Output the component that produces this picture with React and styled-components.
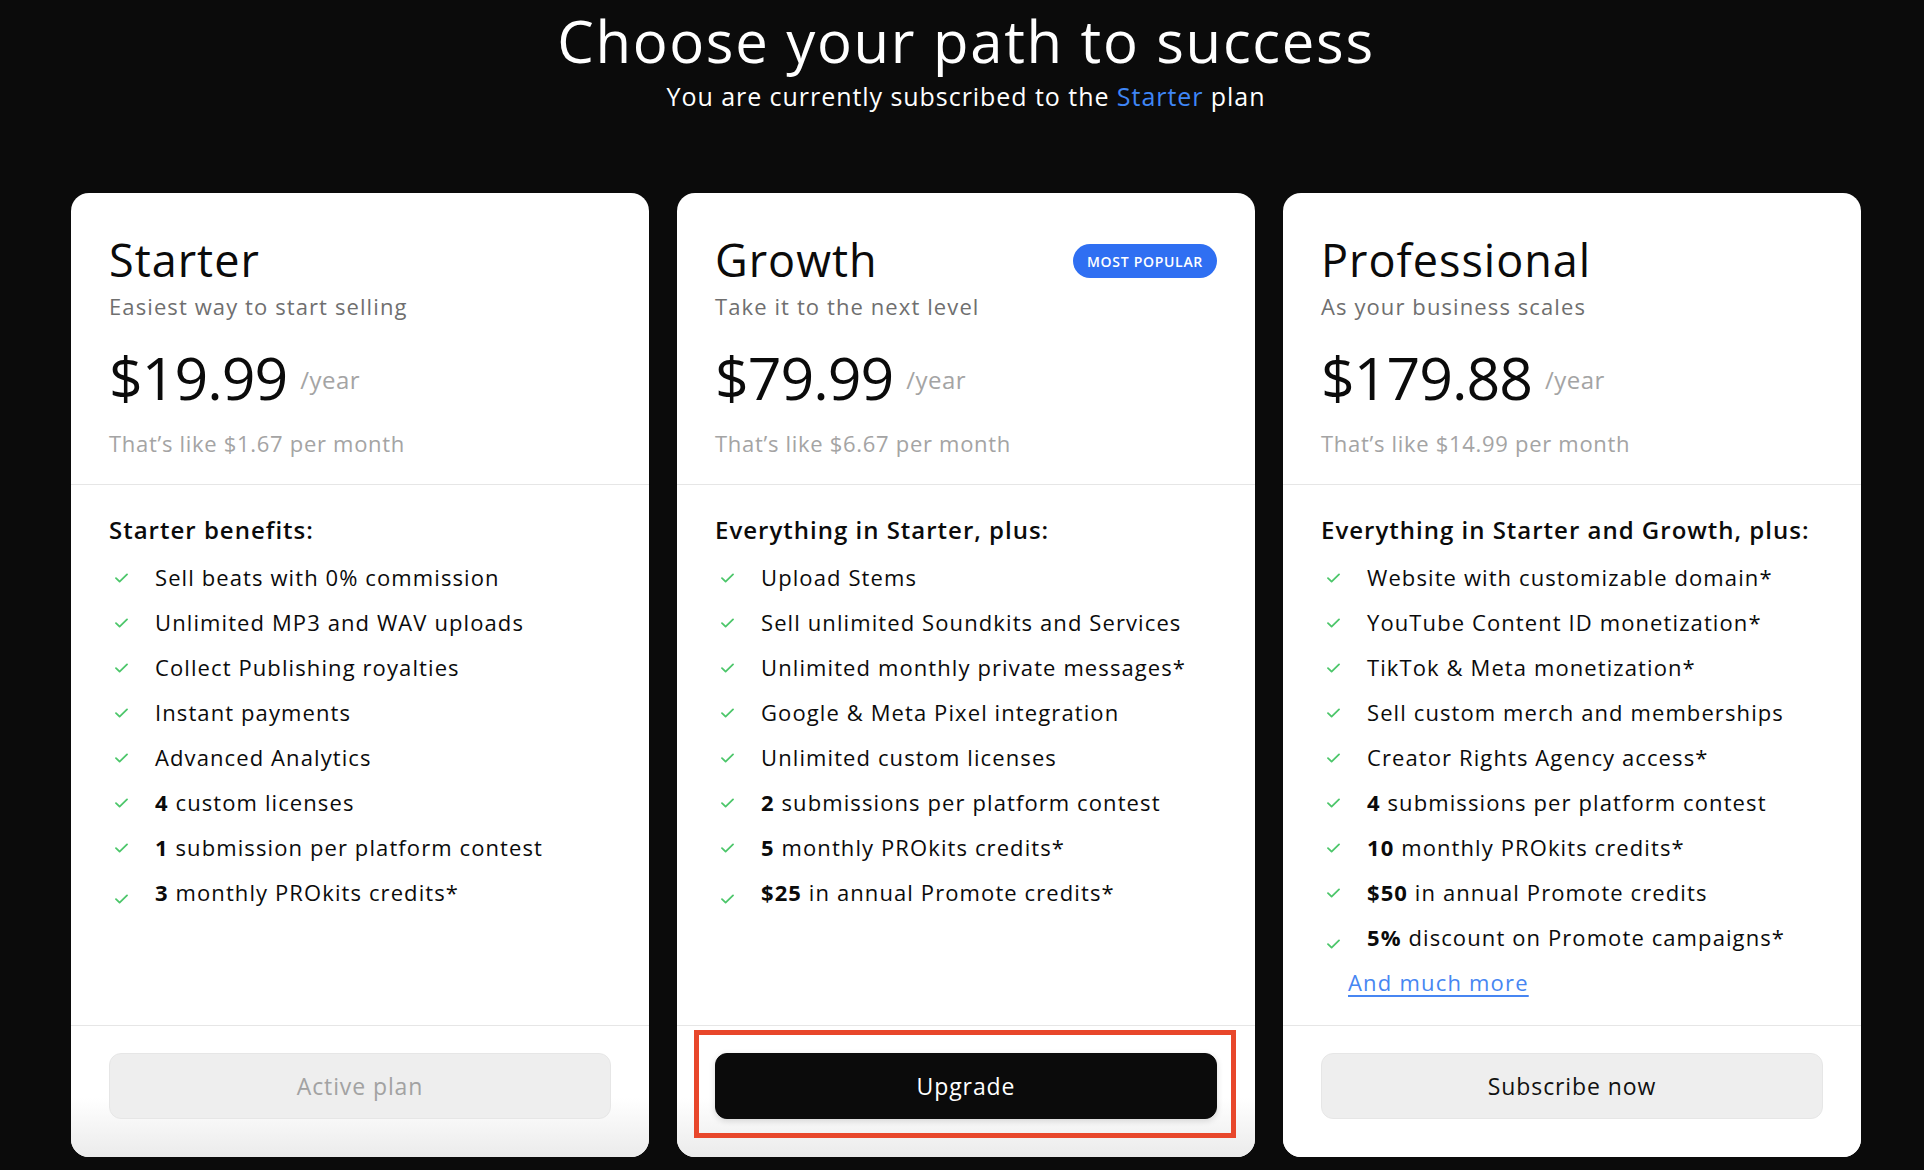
import React from "react";
import styled, { createGlobalStyle } from "styled-components";

const Global = createGlobalStyle`
  html, body { margin: 0; padding: 0; background: #0b0b0b; }
  body { font-family: "Open Sans", "Noto Sans", sans-serif; -webkit-font-smoothing: antialiased; }
  #root { height: 1170px; overflow: hidden; }
`;

const Page = styled.main`
  padding: 7px 63px 0 71px;
  background: #0b0b0b;
  height: 1170px;
  box-sizing: border-box;
`;

const Header = styled.header`
  text-align: center;
  color: #fff;
`;

const Title = styled.h1`
  margin: 0;
  font-size: 58px;
  line-height: 68px;
  font-weight: 500;
  letter-spacing: 1.7px;
`;

const Lead = styled.p`
  margin: 6px 0 0;
  font-size: 25px;
  line-height: 30px;
  font-weight: 400;
  letter-spacing: 0.95px;
`;

const Accent = styled.span`
  color: #3f86f6;
`;

const Grid = styled.section`
  margin-top: 82px;
  display: grid;
  grid-template-columns: repeat(3, 1fr);
  gap: 28px;
`;

const Card = styled.article`
  background: #fff;
  border-radius: 18px;
  display: flex;
  flex-direction: column;
  overflow: hidden;
  color: #0b0b0b;
`;

const Top = styled.div`
  padding: 40px 38px 26px;
  border-bottom: 1px solid #e6e6e6;
`;

const TitleRow = styled.div`
  display: flex;
  align-items: center;
  justify-content: space-between;
`;

const PlanName = styled.h2`
  margin: 0;
  font-size: 45px;
  line-height: 54px;
  font-weight: 500;
  letter-spacing: 1px;
`;

const Badge = styled.span`
  display: inline-flex;
  align-items: center;
  justify-content: center;
  width: 144px;
  height: 34px;
  border-radius: 17px;
  background: #2f6ff2;
  color: #fff;
  font-size: 14px;
  font-weight: 600;
  letter-spacing: 0.7px;
  margin-top: 2px;
`;

const Tagline = styled.p`
  margin: 4px 0 0;
  font-size: 22px;
  line-height: 30px;
  font-weight: 500;
  letter-spacing: 1.1px;
  color: #6f6f6f;
`;

const PriceRow = styled.div`
  margin-top: 21px;
  display: flex;
  align-items: flex-start;
  gap: 13px;
  height: 70px;
`;

const Price = styled.span`
  font-size: 59px;
  line-height: 70px;
  font-weight: 500;
  letter-spacing: -1px;
`;

const Per = styled.span`
  margin-top: 23px;
  font-size: 24px;
  line-height: 30px;
  letter-spacing: 0.5px;
  color: #a4a4a4;
`;

const Monthly = styled.p`
  margin: 16px 0 0;
  font-size: 22px;
  line-height: 30px;
  letter-spacing: 0.7px;
  color: #a4a4a4;
`;

const Body = styled.div`
  flex: 1;
  padding: 30px 38px 20px;
`;

const ListTitle = styled.h3`
  margin: 0 0 10px;
  font-size: 24px;
  line-height: 30px;
  font-weight: 600;
  letter-spacing: 1px;
`;

const List = styled.ul`
  list-style: none;
  margin: 0;
  padding: 0;
`;

const Item = styled.li`
  display: flex;
  align-items: center;
  height: 45px;
  padding-left: 6px;
  font-size: 22px;
  line-height: 45px;
  letter-spacing: 1.1px;
  color: #0b0b0b;
  white-space: nowrap;
`;

const CheckBox = styled.span`
  display: inline-flex;
  width: 13px;
  height: 10px;
  margin-right: 27px;
  flex: none;
  transform: translateY(${(p) => (p.$low ? "6px" : "0")});
`;

const Strong = styled.b`
  font-weight: 700;
`;

const More = styled.a`
  display: inline-block;
  margin-left: 27px;
  font-size: 22px;
  line-height: 45px;
  letter-spacing: 1.2px;
  color: #4786f2;
  text-decoration: underline;
  text-underline-offset: 4px;
  text-decoration-thickness: 2px;
`;

const Footer = styled.div`
  position: relative;
  border-top: 1px solid #e6e6e6;
  padding: 27px 38px 38px;
  background: ${(p) =>
    p.$faded ? "linear-gradient(to bottom, #fff 55%, #ebebeb 100%)" : "#fff"};
`;

const Button = styled.button`
  display: block;
  width: 100%;
  height: 66px;
  border-radius: 12px;
  font-family: inherit;
  font-size: 23px;
  font-weight: 500;
  letter-spacing: 0.9px;
  cursor: pointer;
  border: 1px solid ${(p) => (p.$variant === "dark" ? "#0b0b0b" : "#e6e6e6")};
  background: ${(p) => (p.$variant === "dark" ? "#0b0b0b" : "#eeeeee")};
  color: ${(p) =>
    p.$variant === "dark" ? "#fff" : p.$variant === "muted" ? "#a2a2a2" : "#111"};
  box-shadow: ${(p) => (p.$variant === "dark" ? "0 2px 6px rgba(0,0,0,0.15)" : "none")};
`;

const Highlight = styled.div`
  position: absolute;
  left: 17px;
  top: 4px;
  width: 542px;
  height: 108px;
  box-sizing: border-box;
  border: 5px solid #e8472b;
  pointer-events: none;
`;

const Check = ({ low }) => (
  <CheckBox $low={low}>
    <svg width="13" height="10" viewBox="0 0 13 10" fill="none">
      <polyline
        points="1,5.2 4.6,8.6 12,1.4"
        stroke="#4cc66a"
        strokeWidth="1.8"
        strokeLinecap="round"
        strokeLinejoin="round"
      />
    </svg>
  </CheckBox>
);

const plans = [
  {
    name: "Starter",
    tagline: "Easiest way to start selling",
    price: "$19.99",
    monthly: "That’s like $1.67 per month",
    listTitle: "Starter benefits:",
    items: [
      [null, "Sell beats with 0% commission"],
      [null, "Unlimited MP3 and WAV uploads"],
      [null, "Collect Publishing royalties"],
      [null, "Instant payments"],
      [null, "Advanced Analytics"],
      ["4", " custom licenses"],
      ["1", " submission per platform contest"],
      ["3", " monthly PROkits credits*"],
    ],
    button: "Active plan",
    variant: "muted",
    faded: true,
  },
  {
    name: "Growth",
    badge: "MOST POPULAR",
    tagline: "Take it to the next level",
    price: "$79.99",
    monthly: "That’s like $6.67 per month",
    listTitle: "Everything in Starter, plus:",
    items: [
      [null, "Upload Stems"],
      [null, "Sell unlimited Soundkits and Services"],
      [null, "Unlimited monthly private messages*"],
      [null, "Google & Meta Pixel integration"],
      [null, "Unlimited custom licenses"],
      ["2", " submissions per platform contest"],
      ["5", " monthly PROkits credits*"],
      ["$25", " in annual Promote credits*"],
    ],
    button: "Upgrade",
    variant: "dark",
    faded: true,
    highlight: true,
  },
  {
    name: "Professional",
    tagline: "As your business scales",
    price: "$179.88",
    monthly: "That’s like $14.99 per month",
    listTitle: "Everything in Starter and Growth, plus:",
    items: [
      [null, "Website with customizable domain*"],
      [null, "YouTube Content ID monetization*"],
      [null, "TikTok & Meta monetization*"],
      [null, "Sell custom merch and memberships"],
      [null, "Creator Rights Agency access*"],
      ["4", " submissions per platform contest"],
      ["10", " monthly PROkits credits*"],
      ["$50", " in annual Promote credits"],
      ["5%", " discount on Promote campaigns*"],
    ],
    more: "And much more",
    button: "Subscribe now",
    variant: "light",
  },
];

export default function App() {
  return (
    <>
      <Global />
      <Page>
        <Header>
          <Title>Choose your path to success</Title>
          <Lead>
            You are currently subscribed to the <Accent>Starter</Accent> plan
          </Lead>
        </Header>
        <Grid>
          {plans.map((p) => (
            <Card key={p.name}>
              <Top>
                <TitleRow>
                  <PlanName>{p.name}</PlanName>
                  {p.badge && <Badge>{p.badge}</Badge>}
                </TitleRow>
                <Tagline>{p.tagline}</Tagline>
                <PriceRow>
                  <Price>{p.price}</Price>
                  <Per>/year</Per>
                </PriceRow>
                <Monthly>{p.monthly}</Monthly>
              </Top>
              <Body>
                <ListTitle>{p.listTitle}</ListTitle>
                <List>
                  {p.items.map(([b, t], i) => (
                    <Item key={i}>
                      <Check low={i === p.items.length - 1} />
                      <span>
                        {b && <Strong>{b}</Strong>}
                        {t}
                      </span>
                    </Item>
                  ))}
                </List>
                {p.more && <More href="#">{p.more}</More>}
              </Body>
              <Footer $faded={p.faded}>
                <Button $variant={p.variant}>{p.button}</Button>
                {p.highlight && <Highlight />}
              </Footer>
            </Card>
          ))}
        </Grid>
      </Page>
    </>
  );
}
